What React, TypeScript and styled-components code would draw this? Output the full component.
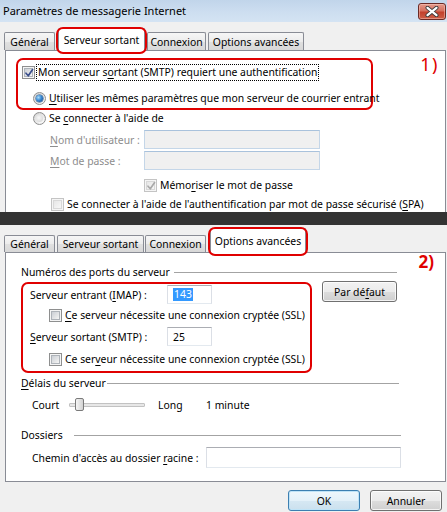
import React from "react";
import styled, { createGlobalStyle, css } from "styled-components";

const GlobalStyle = createGlobalStyle`
  html, body { margin: 0; padding: 0; }
  body {
    background: #f0f0f0;
    font-family: "Noto Sans", "Open Sans", sans-serif;
    font-size: 10.4px;
    color: #000;
  }
  * { box-sizing: border-box; }
`;

const Window = styled.div`
  width: 447px;
  height: 512px;
  overflow: hidden;
  display: flex;
  flex-direction: column;
  background: #f0f0f0;
`;

const TitleBar = styled.div`
  height: 22px;
  flex: none;
  display: flex;
  align-items: flex-start;
  justify-content: space-between;
  padding: 0 1px 0 3px;
  background: linear-gradient(#c1d5ea, #cddef0 55%, #d4e3f3);
`;

const TitleText = styled.span`
  font-size: 11px;
  line-height: 22px;
  color: #000;
`;

const CloseButton = styled.div`
  margin-top: 3px;
  width: 28px;
  height: 17px;
  border: 1px solid #6b2a25;
  border-radius: 3px;
  background: linear-gradient(#e49a8c, #d5705f 45%, #c2412d 55%, #cc5e47);
  box-shadow: inset 0 0 0 1px rgba(255, 210, 200, 0.45);
  display: flex;
  align-items: center;
  justify-content: center;
`;

const Section = styled.div<{ $h: number }>`
  height: ${(p) => p.$h}px;
  flex: none;
  overflow: hidden;
  display: flex;
  flex-direction: column;
`;

const Separator = styled.div`
  height: 13px;
  flex: none;
  background: #333333;
`;

const TabRow = styled.div<{ $top: number }>`
  display: flex;
  align-items: flex-end;
  padding: ${(p) => p.$top}px 0 0 4px;
  position: relative;
  z-index: 2;
  flex: none;
`;

const Tab = styled.div<{ $w: number; $h: number; $mr: number; $active?: boolean }>`
  width: ${(p) => p.$w}px;
  height: ${(p) => p.$h}px;
  margin-right: ${(p) => p.$mr}px;
  border: 1px solid #898c95;
  border-bottom: none;
  border-radius: 2px 2px 0 0;
  background: linear-gradient(#f6f6f6, #ececec 50%, #e0e0e0 51%, #d8d8d8);
  display: flex;
  align-items: center;
  justify-content: center;
  white-space: nowrap;
  ${(p) =>
    p.$active &&
    css`
      position: relative;
      margin-bottom: -1px;
      background: #ffffff;
      &::after {
        content: "";
        position: absolute;
        left: -3px;
        right: -3px;
        top: -2px;
        bottom: -3px;
        border: 2px solid #e00000;
        border-radius: 7px;
      }
    `}
`;

const Panel = styled.div<{ $h?: number }>`
  position: relative;
  margin: 0 1px 0 5px;
  background: #ffffff;
  border: 1px solid #898c95;
  display: flex;
  flex-direction: column;
  align-items: flex-start;
  ${(p) =>
    p.$h
      ? css`
          height: ${p.$h}px;
          flex: none;
        `
      : css`
          flex: 1;
          border-bottom: none;
        `}
`;

const Annotation = styled.span<{ $top: number; $right: number; $size: number; $bold?: boolean }>`
  position: absolute;
  top: ${(p) => p.$top}px;
  right: ${(p) => p.$right}px;
  font-size: ${(p) => p.$size}px;
  line-height: ${(p) => p.$size}px;
  font-weight: ${(p) => (p.$bold ? 700 : 400)};
  letter-spacing: ${(p) => (p.$bold ? 0 : 1.5)}px;
  color: #e00000;
`;

const RedBox = styled.div<{ $w: number; $h: number; $pad: string; $gap?: number; $mt: number; $ml: number }>`
  width: ${(p) => p.$w}px;
  height: ${(p) => p.$h}px;
  margin: ${(p) => p.$mt}px 0 0 ${(p) => p.$ml}px;
  padding: ${(p) => p.$pad};
  border: 2px solid #e00000;
  border-radius: 7px;
  display: flex;
  flex-direction: column;
  align-items: flex-start;
  gap: ${(p) => p.$gap ?? 0}px;
  flex: none;
`;

const OptionRow = styled.div<{ $ml?: number; $mt?: number; $gap?: number }>`
  display: flex;
  align-items: center;
  gap: ${(p) => p.$gap ?? 3}px;
  height: 16px;
  margin-left: ${(p) => p.$ml ?? 0}px;
  margin-top: ${(p) => p.$mt ?? 0}px;
  white-space: nowrap;
`;

const FocusLabel = styled.span`
  outline: 1px dotted #000;
  outline-offset: 0;
  padding: 0 1px;
  line-height: 15px;
`;

const Key = styled.span`
  text-decoration: underline;
  text-underline-offset: 1.5px;
  text-decoration-thickness: 1px;
`;

const CheckBoxBox = styled.span<{ $disabled?: boolean }>`
  position: relative;
  width: 13px;
  height: 13px;
  flex: none;
  border: 1px solid ${(p) => (p.$disabled ? "#c4c4c4" : "#8e8f8f")};
  background: #f5f5f5;
  &::before {
    content: "";
    position: absolute;
    inset: 1px;
    border: 1px solid ${(p) => (p.$disabled ? "#d8d8d8" : "#aeb3b9")};
    background: ${(p) =>
      p.$disabled
        ? "linear-gradient(135deg, #e6e6e6, #f4f4f4 80%)"
        : "linear-gradient(135deg, #cbcfd5, #e8e9ea 70%, #f6f6f6)"};
  }
  svg {
    position: absolute;
    left: 0;
    top: 0;
  }
`;

const RadioCircle = styled.span<{ $on?: boolean }>`
  position: relative;
  width: 13px;
  height: 13px;
  flex: none;
  border-radius: 50%;
  border: 1px solid #8f8f8f;
  background: radial-gradient(circle at 65% 70%, #ffffff, #e3e3e3 60%, #c8c8c8);
  &::before {
    content: "";
    position: absolute;
    inset: 2px;
    border-radius: 50%;
    background: ${(p) =>
      p.$on
        ? "radial-gradient(circle at 35% 35%, #a9dcf9, #3a8ad4 45%, #14498f 90%)"
        : "radial-gradient(circle at 40% 40%, #f8f8f8, #dcdcdc 70%, #cfcfcf)"};
    box-shadow: ${(p) => (p.$on ? "0 0 0 0.5px #1c4f86" : "none")};
  }
`;

const FieldRow = styled.div<{ $ml: number; $mt: number; $h: number }>`
  display: flex;
  align-items: center;
  height: ${(p) => p.$h}px;
  margin: ${(p) => p.$mt}px 0 0 ${(p) => p.$ml}px;
  white-space: nowrap;
  flex: none;
`;

const FieldLabel = styled.span<{ $w: number; $disabled?: boolean }>`
  width: ${(p) => p.$w}px;
  flex: none;
  color: ${(p) => (p.$disabled ? "#8d8d8d" : "#000")};
`;

const TextBox = styled.div<{ $w: number; $h: number; $disabled?: boolean }>`
  width: ${(p) => p.$w}px;
  height: ${(p) => p.$h}px;
  flex: none;
  display: flex;
  align-items: center;
  padding-left: 5px;
  border: 1px solid;
  border-color: ${(p) =>
    p.$disabled ? "#a9c2dc #c4d6e8 #c4d6e8 #c4d6e8" : "#abadb3 #dbdfe6 #e3e9ef #dbdfe6"};
  background: ${(p) => (p.$disabled ? "#f0f0f0" : "#ffffff")};
`;

const Selected = styled.span`
  background: #3399ff;
  color: #fff;
  padding: 0 1px;
  line-height: 13px;
`;

const GroupHeader = styled.div<{ $mt: number; $w: number; $mr: number }>`
  display: flex;
  align-items: center;
  height: 14px;
  width: calc(100% - ${(p) => 15 + p.$mr}px);
  margin: ${(p) => p.$mt}px ${(p) => p.$mr}px 0 15px;
  flex: none;
  white-space: nowrap;
  & > span {
    width: ${(p) => p.$w}px;
    flex: none;
  }
  &::after {
    content: "";
    flex: 1;
    height: 1px;
    background: #a3a3a3;
  }
`;

const PortsRow = styled.div`
  display: flex;
  align-items: flex-start;
  margin: 2px 0 0 15px;
  flex: none;
`;

const SliderRow = styled.div`
  display: flex;
  align-items: center;
  height: 16px;
  margin-top: 7px;
  padding-left: 26px;
  flex: none;
  white-space: nowrap;
`;

const SliderText = styled.span<{ $w?: number; $ml?: number }>`
  width: ${(p) => (p.$w ? `${p.$w}px` : "auto")};
  margin-left: ${(p) => p.$ml ?? 0}px;
  flex: none;
`;

const SliderTrack = styled.div`
  position: relative;
  width: 76px;
  height: 4px;
  flex: none;
  border: 1px solid #c2c2c2;
  border-radius: 1px;
  background: #e7e7e7;
`;

const SliderThumb = styled.div`
  position: absolute;
  left: 5px;
  top: -6px;
  width: 9px;
  height: 13px;
  border: 1px solid #7a7a7a;
  border-radius: 2px;
  background: linear-gradient(90deg, #f6f6f6, #e4e4e4 50%, #d2d2d2);
`;

const Button = styled.div<{ $w: number; $default?: boolean; $ml?: number }>`
  width: ${(p) => p.$w}px;
  height: 21px;
  flex: none;
  margin-left: ${(p) => p.$ml ?? 0}px;
  border: 1px solid #707070;
  border-radius: 3px;
  background: linear-gradient(#f2f2f2, #ebebeb 50%, #dddddd 51%, #cfcfcf);
  box-shadow: inset 0 0 0 1px rgba(255, 255, 255, 0.75);
  display: flex;
  align-items: center;
  justify-content: center;
  white-space: nowrap;
  ${(p) =>
    p.$default &&
    css`
      border-color: #3c7fb1;
      box-shadow: inset 0 0 0 1px #bfe3f7;
      background: linear-gradient(#eef7fc, #e4f1f9 50%, #d6e8f3 51%, #cbe0ee);
    `}
`;

const ButtonBar = styled.div`
  display: flex;
  justify-content: flex-end;
  gap: 10px;
  margin-top: 8px;
  padding-right: 5px;
  flex: none;
`;

function CheckBox({ checked, disabled }: { checked?: boolean; disabled?: boolean }) {
  return (
    <CheckBoxBox $disabled={disabled}>
      {checked && (
        <svg width="13" height="13" viewBox="0 0 13 13">
          <path
            d="M3 6.2 L5.3 8.8 L9.6 2.6"
            fill="none"
            stroke={disabled ? "#a9a9a9" : "#3b4f8c"}
            strokeWidth="1.7"
            strokeLinecap="round"
            strokeLinejoin="round"
          />
        </svg>
      )}
    </CheckBoxBox>
  );
}

function CloseIcon() {
  return (
    <svg width="14" height="11" viewBox="0 0 14 11">
      <path d="M2.5 1.8 L11.5 9.2 M11.5 1.8 L2.5 9.2" stroke="#3a3a3a" strokeWidth="4" strokeLinecap="round" />
      <path d="M2.5 1.8 L11.5 9.2 M11.5 1.8 L2.5 9.2" stroke="#ffffff" strokeWidth="2.2" strokeLinecap="round" />
    </svg>
  );
}

export default function App() {
  return (
    <>
      <GlobalStyle />
      <Window>
        <TitleBar>
          <TitleText>Paramètres de messagerie Internet</TitleText>
          <CloseButton>
            <CloseIcon />
          </CloseButton>
        </TitleBar>

        <Section $h={190}>
          <TabRow $top={6}>
            <Tab $w={51} $h={18} $mr={3}>Général</Tab>
            <Tab $w={87} $h={23} $mr={2} $active>
              Serveur sortant
            </Tab>
            <Tab $w={59} $h={18} $mr={2}>Connexion</Tab>
            <Tab $w={96} $h={18} $mr={0}>Options avancées</Tab>
          </TabRow>
          <Panel>
            <Annotation $top={4} $right={6} $size={18}>
              1)
            </Annotation>
            <RedBox $w={357} $h={52} $pad="4px 0 0 4px" $gap={10} $mt={7} $ml={10}>
              <OptionRow $gap={2}>
                <CheckBox checked />
                <FocusLabel>
                  Mon serveur s<Key>o</Key>rtant (SMTP) requiert une authentification
                </FocusLabel>
              </OptionRow>
              <OptionRow $ml={11}>
                <RadioCircle $on />
                <span>
                  <Key>U</Key>tiliser les mêmes paramètres que mon serveur de courrier entrant
                </span>
              </OptionRow>
            </RedBox>
            <OptionRow $ml={27}>
              <RadioCircle />
              <span>
                Se <Key>c</Key>onnecter à l'aide de
              </span>
            </OptionRow>
            <FieldRow $ml={44} $mt={4} $h={19}>
              <FieldLabel $w={94} $disabled>
                <Key>N</Key>om d'utilisateur :
              </FieldLabel>
              <TextBox $w={176} $h={19} $disabled />
            </FieldRow>
            <FieldRow $ml={44} $mt={2} $h={19}>
              <FieldLabel $w={94} $disabled>
                <Key>M</Key>ot de passe :
              </FieldLabel>
              <TextBox $w={176} $h={19} $disabled />
            </FieldRow>
            <OptionRow $ml={138} $mt={7}>
              <CheckBox checked disabled />
              <span>
                Mémo<Key>r</Key>iser le mot de passe
              </span>
            </OptionRow>
            <OptionRow $ml={45} $mt={3}>
              <CheckBox disabled />
              <span>
                Se connecter à l'aide de l'authentification par mot de passe sécurisé (<Key>S</Key>PA)
              </span>
            </OptionRow>
          </Panel>
        </Section>

        <Separator />

        <Section $h={287}>
          <TabRow $top={3}>
            <Tab $w={51} $h={17} $mr={2}>Général</Tab>
            <Tab $w={87} $h={17} $mr={1}>Serveur sortant</Tab>
            <Tab $w={61} $h={17} $mr={4}>Connexion</Tab>
            <Tab $w={96} $h={25} $mr={0} $active>
              Options avancées
            </Tab>
          </TabRow>
          <Panel $h={230}>
            <Annotation $top={0} $right={11} $size={17} $bold>
              2)
            </Annotation>
            <GroupHeader $mt={12} $w={153} $mr={48}>
              <span>Numéros des ports du serveur</span>
            </GroupHeader>
            <PortsRow>
              <RedBox $w={291} $h={91} $pad="1px 0 0 7px" $mt={1} $ml={0}>
                <FieldRow $ml={0} $mt={0} $h={19}>
                  <FieldLabel $w={137}>
                    Serveur entrant (<Key>I</Key>MAP) :
                  </FieldLabel>
                  <TextBox $w={45} $h={19}>
                    <Selected>143</Selected>
                  </TextBox>
                </FieldRow>
                <OptionRow $ml={19} $mt={3}>
                  <CheckBox />
                  <span>
                    <Key>C</Key>e serveur nécessite une connexion cryptée (SSL)
                  </span>
                </OptionRow>
                <FieldRow $ml={0} $mt={4} $h={19}>
                  <FieldLabel $w={137}>
                    <Key>S</Key>erveur sortant (SMTP) :
                  </FieldLabel>
                  <TextBox $w={45} $h={19}>
                    <span>25</span>
                  </TextBox>
                </FieldRow>
                <OptionRow $ml={19} $mt={5}>
                  <CheckBox />
                  <span>
                    Ce ser<Key>v</Key>eur nécessite une connexion cryptée (SSL)
                  </span>
                </OptionRow>
              </RedBox>
              <Button $w={75} $ml={10}>
                <span>
                  Par dé<Key>f</Key>aut
                </span>
              </Button>
            </PortsRow>
            <GroupHeader $mt={3} $w={86} $mr={46}>
              <span>
                <Key>D</Key>élais du serveur
              </span>
            </GroupHeader>
            <SliderRow>
              <SliderText $w={37}>Court</SliderText>
              <SliderTrack>
                <SliderThumb />
              </SliderTrack>
              <SliderText $w={48} $ml={13}>
                Long
              </SliderText>
              <SliderText>1 minute</SliderText>
            </SliderRow>
            <GroupHeader $mt={15} $w={53} $mr={44}>
              <span>Dossiers</span>
            </GroupHeader>
            <FieldRow $ml={26} $mt={5} $h={21}>
              <FieldLabel $w={174}>
                Chemin d'accès au dossier <Key>r</Key>acine :
              </FieldLabel>
              <TextBox $w={195} $h={21} />
            </FieldRow>
          </Panel>
          <ButtonBar>
            <Button $w={72} $default>
              OK
            </Button>
            <Button $w={72}>Annuler</Button>
          </ButtonBar>
        </Section>
      </Window>
    </>
  );
}
